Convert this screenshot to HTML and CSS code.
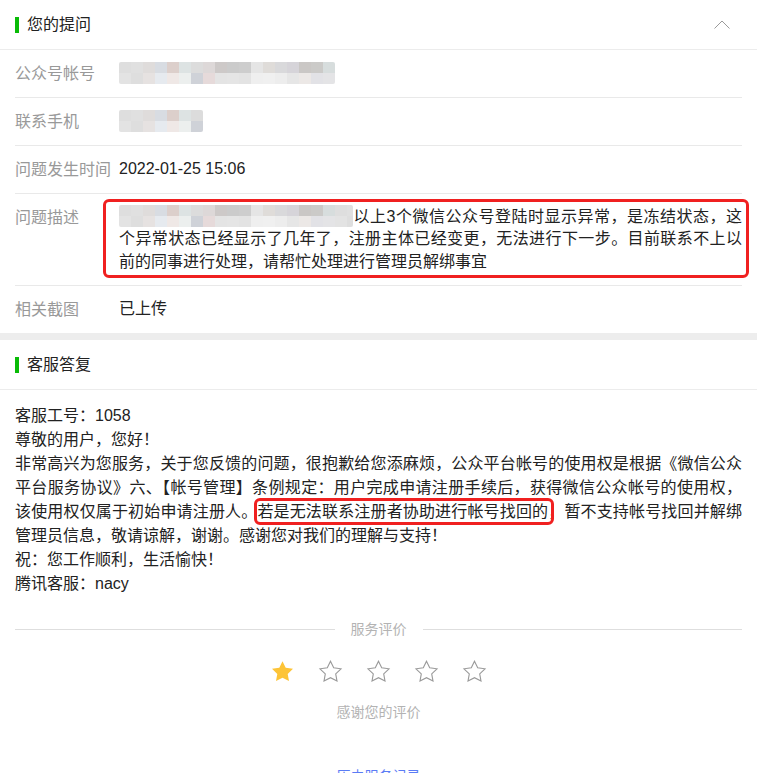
FILE: index.html
```html
<!DOCTYPE html>
<html lang="zh-CN">
  <head>
    <meta charset="UTF-8" />
    <meta name="viewport" content="width=device-width, initial-scale=1.0" />
    <title>问题详情</title>

    <link rel="stylesheet" href="styles.css">
  </head>

  <body>
    <div class="panel">
      <div class="panel-hd">
        <h2 class="panel-title">您的提问</h2>
        <svg class="fold" width="16" height="9" viewBox="0 0 16 9">
          <polyline points="0.5,8.5 8,1 15.5,8.5" fill="none" stroke="#9a9a9a" stroke-width="1" />
        </svg>
      </div>
      <ul class="info-list">
        <li class="info-row">
          <span class="info-label">公众号帐号</span>
          <div class="info-value"><span class="mosaic mosaic-account"></span></div>
        </li>
        <li class="info-row">
          <span class="info-label">联系手机</span>
          <div class="info-value"><span class="mosaic mosaic-phone"></span></div>
        </li>
        <li class="info-row">
          <span class="info-label">问题发生时间</span>
          <div class="info-value">2022-01-25 15:06</div>
        </li>
        <li class="info-row info-row-desc">
          <span class="info-label">问题描述</span>
          <div class="info-value info-value-mark"><span class="mosaic mosaic-desc"></span>以上3个微信公众号登陆时显示异常，是冻结状态，这个异常状态已经显示了几年了，注册主体已经变更，无法进行下一步。目前联系不上以前的同事进行处理，请帮忙处理进行管理员解绑事宜</div>
        </li>
        <li class="info-row">
          <span class="info-label">相关截图</span>
          <div class="info-value">已上传</div>
        </li>
      </ul>
    </div>

    <div class="band"></div>

    <div class="panel">
      <div class="panel-hd">
        <h2 class="panel-title">客服答复</h2>
      </div>
      <div class="reply">
        <p>客服工号：1058</p>
        <p>尊敬的用户，您好！</p>
        <p>非常高兴为您服务，关于您反馈的问题，很抱歉给您添麻烦，公众平台帐号的使用权是根据《微信公众平台服务协议》六、【帐号管理】条例规定：用户完成申请注册手续后，获得微信公众帐号的使用权，该使用权仅属于初始申请注册人。<span class="reply-mark">若是无法联系注册者协助进行帐号找回的</span>，暂不支持帐号找回并解绑管理员信息，敬请谅解，谢谢。感谢您对我们的理解与支持！</p>
        <p>祝：您工作顺利，生活愉快！</p>
        <p>腾讯客服：nacy</p>
      </div>

      <div class="rate">
        <div class="rate-title">服务评价</div>
        <div class="stars">
          <svg class="star" viewBox="0 0 24 24"><path class="star-on" d="M12 1.2l3.2 6.6 7.3 1-5.3 5.1 1.3 7.2L12 17.7l-6.5 3.4 1.3-7.2L1.5 8.8l7.3-1z" /></svg>
          <svg class="star" viewBox="0 0 24 24"><path class="star-off" d="M12 1.2l3.2 6.6 7.3 1-5.3 5.1 1.3 7.2L12 17.7l-6.5 3.4 1.3-7.2L1.5 8.8l7.3-1z" /></svg>
          <svg class="star" viewBox="0 0 24 24"><path class="star-off" d="M12 1.2l3.2 6.6 7.3 1-5.3 5.1 1.3 7.2L12 17.7l-6.5 3.4 1.3-7.2L1.5 8.8l7.3-1z" /></svg>
          <svg class="star" viewBox="0 0 24 24"><path class="star-off" d="M12 1.2l3.2 6.6 7.3 1-5.3 5.1 1.3 7.2L12 17.7l-6.5 3.4 1.3-7.2L1.5 8.8l7.3-1z" /></svg>
          <svg class="star" viewBox="0 0 24 24"><path class="star-off" d="M12 1.2l3.2 6.6 7.3 1-5.3 5.1 1.3 7.2L12 17.7l-6.5 3.4 1.3-7.2L1.5 8.8l7.3-1z" /></svg>
        </div>
        <p class="rate-tip">感谢您的评价</p>
        <a class="history-link" href="#">历史服务记录</a>
      </div>
    </div>
  </body>
</html>
```

FILE: styles.css
```css
* {
  margin: 0;
  padding: 0;
  box-sizing: border-box;
}

body {
  font-family: "Liberation Sans", "Noto Sans CJK SC", sans-serif;
  font-size: 16px;
  color: #222222;
  background-color: #ffffff;
  padding-bottom: 40px;
}

.panel-hd {
  display: flex;
  align-items: center;
  justify-content: space-between;
  height: 50px;
  padding: 0 27px 0 15px;
  border-bottom: 1px solid #ececec;
}

.panel-title {
  display: flex;
  align-items: center;
  font-size: 16px;
  font-weight: normal;
  line-height: 24px;
  color: #222222;
}

.panel-title::before {
  content: "";
  width: 4px;
  height: 16px;
  margin-right: 8px;
  background-color: #09bb07;
}

.fold {
  display: block;
}

.info-list {
  list-style: none;
  padding: 0 15px;
}

.info-row {
  display: flex;
  align-items: flex-start;
  padding: 12px 0 11px;
  border-bottom: 1px solid #e9e9e9;
}

.info-row:last-child {
  border-bottom: none;
}

.info-row-desc {
  padding-bottom: 12px;
}

.info-label {
  width: 104px;
  flex-shrink: 0;
  color: #999999;
  line-height: 24px;
}

.info-value {
  flex: 1;
  line-height: 22.4px;
  text-align: justify;
}

.info-value-mark {
  padding: 4px 4px 2px 13px;
  margin: -4px -4px -2px -13px;
  outline: 3px solid #f02020;
  border-radius: 3px;
}

/* pixelated blocks hiding private data */
.mosaic {
  display: inline-block;
  vertical-align: top;
  height: 22px;
  border-radius: 2px;
  background-image:
    linear-gradient(90deg, #dedede 0 12px, #e0e0e0 12px 24px, #dfdcdb 24px 36px, #d8dce2 36px 48px, #dccfcb 48px 60px, #dde3e3 60px 72px, #dcdcdc 72px 84px, #ddd8d8 84px 96px, #cdc9c8 96px 108px, #cbcbcb 108px 120px, #cdcdcd 120px 132px, #e5e5e5 132px 144px, #dfdcd9 144px 156px, #d9d9db 156px 168px, #d6d4d9 168px 180px, #cac7c5 180px 192px, #cbcac8 192px 204px, #d7dddd 204px 216px),
    linear-gradient(90deg, #e3e3e3 0 12px, #dedede 12px 24px, #e6e2e1 24px 36px, #e6eaef 36px 48px, #efe8e6 48px 60px, #ecefee 60px 72px, #cfd2d8 72px 84px, #e6dada 84px 96px, #e4e4e4 96px 108px, #e5e5e5 108px 120px, #e3e3e3 120px 132px, #efefef 132px 144px, #f0f0f0 144px 156px, #ededed 156px 168px, #e6e6e6 168px 180px, #ece8e6 180px 192px, #e2e2e6 192px 204px, #e4e4e6 204px 216px);
  background-size: 216px 11px;
  background-position: 0 0, 0 11px;
  background-repeat: repeat-x;
}

.mosaic-account {
  width: 216px;
}

.mosaic-phone {
  width: 84px;
}

.mosaic-desc {
  width: 234px;
  margin-top: -1px;
}

.band {
  height: 7px;
  background-color: #ededed;
}

.reply {
  padding: 14px 15px 0;
  line-height: 24px;
  text-align: justify;
}

.reply-mark {
  padding: 2px 3px 2px 0;
  margin-right: -3px;
  outline: 3px solid #f02020;
  border-radius: 3px;
}

.rate {
  margin-top: 23px;
  padding: 0 15px;
  text-align: center;
}

.rate-title {
  display: flex;
  align-items: center;
  gap: 16px;
  font-size: 14px;
  line-height: 20px;
  color: #b3b3b3;
}

.rate-title::before,
.rate-title::after {
  content: "";
  flex: 1;
  height: 1px;
  background-color: #dedede;
}

.stars {
  display: flex;
  justify-content: center;
  gap: 23px;
  margin-top: 21px;
}

.star {
  width: 25px;
  height: 24px;
}

.star-on {
  fill: #fdc437;
}

.star-off {
  fill: none;
  stroke: #999999;
  stroke-width: 1.1;
}

.rate-tip {
  margin-top: 18px;
  font-size: 14px;
  line-height: 20px;
  color: #b3b3b3;
}

.history-link {
  display: inline-block;
  margin-top: 44px;
  font-size: 14px;
  line-height: 20px;
  color: #5b7cf5;
  text-decoration: none;
}
```
